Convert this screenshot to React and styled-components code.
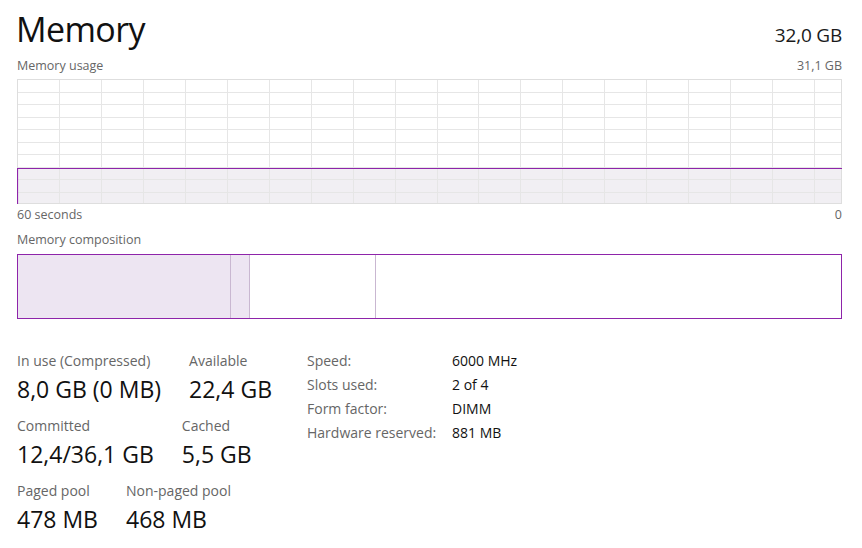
import React from "react";
import styled, { createGlobalStyle } from "styled-components";

const GlobalStyle = createGlobalStyle`
  html, body {
    margin: 0;
    padding: 0;
    background: #ffffff;
  }
  body {
    font-family: "Segoe UI", "Open Sans", "Noto Sans", sans-serif;
    color: #1a1a1a;
  }
`;

const GRAPH_W = 825;
const GRAPH_H = 125;
const GRID_X = 41.95;
const GRID_Y = 12.5;
const USAGE_Y = 89;
const PURPLE = "#8e24aa";

//   GRAPH LINES
const verticals = Array.from({ length: 19 }, (_, i) => (i + 1) * GRID_X);
const horizontals = Array.from({ length: 9 }, (_, i) => (i + 1) * GRID_Y);

const composition = [
  { key: "inuse", width: 212, fill: "#ede5f2" },
  { key: "modified", width: 18, fill: "#ede5f2" },
  { key: "standby", width: 125, fill: "#ffffff" },
];

const stats = [
  [
    { label: "In use (Compressed)", value: "8,0 GB (0 MB)" },
    { label: "Available", value: "22,4 GB" },
  ],
  [
    { label: "Committed", value: "12,4/36,1 GB" },
    { label: "Cached", value: "5,5 GB" },
  ],
  [
    { label: "Paged pool", value: "478 MB" },
    { label: "Non-paged pool", value: "468 MB" },
  ],
];

const details = [
  { label: "Speed:", value: "6000 MHz" },
  { label: "Slots used:", value: "2 of 4" },
  { label: "Form factor:", value: "DIMM" },
  { label: "Hardware reserved:", value: "881 MB" },
];

const UsageGraph = () => (
  <GraphSvg width={GRAPH_W} height={GRAPH_H} viewBox={`0 0 ${GRAPH_W} ${GRAPH_H}`}>
    <rect x="0" y={USAGE_Y} width={GRAPH_W} height={GRAPH_H - USAGE_Y} fill="#f1eff3" />
    {verticals.map((x) => (
      <line key={`v${x}`} x1={Math.round(x) + 0.5} y1="0" x2={Math.round(x) + 0.5} y2={GRAPH_H} stroke="#e6e6e6" strokeWidth="1" />
    ))}
    {horizontals.map((y) => (
      <line key={`h${y}`} x1="0" y1={Math.round(y) + 0.5} x2={GRAPH_W} y2={Math.round(y) + 0.5} stroke="#e6e6e6" strokeWidth="1" />
    ))}
    <rect x="0.5" y="0.5" width={GRAPH_W - 1} height={GRAPH_H - 1} fill="none" stroke="#dedede" strokeWidth="1" />
    <polyline
      points={`0.5,${GRAPH_H} 0.5,${USAGE_Y + 0.5} ${GRAPH_W},${USAGE_Y + 0.5}`}
      fill="none"
      stroke={PURPLE}
      strokeWidth="1.2"
    />
  </GraphSvg>
);

const App = () => {
  return (
    <>
      <GlobalStyle />
      <Page>
        <Header>
          <Title>Memory</Title>
          <Total>32,0 GB</Total>
        </Header>

        <CaptionRow>
          <Caption>Memory usage</Caption>
          <Caption>31,1 GB</Caption>
        </CaptionRow>
        <UsageGraph />
        <CaptionRow $gap={3}>
          <Caption>60 seconds</Caption>
          <Caption>0</Caption>
        </CaptionRow>

        <CaptionRow $gap={4}>
          <Caption>Memory composition</Caption>
        </CaptionRow>
        <CompositionBar>
          {composition.map((seg) => (
            <Segment key={seg.key} $width={seg.width} $fill={seg.fill} />
          ))}
          <FreeSegment />
        </CompositionBar>

        <Stats>
          <StatColumn>
            {stats.map((row, i) => (
              <StatRow key={i}>
                {row.map((s) => (
                  <Stat key={s.label}>
                    <StatLabel>{s.label}</StatLabel>
                    <StatValue>{s.value}</StatValue>
                  </Stat>
                ))}
              </StatRow>
            ))}
          </StatColumn>

          <Details>
            {details.map((d) => (
              <React.Fragment key={d.label}>
                <DetailLabel>{d.label}</DetailLabel>
                <DetailValue>{d.value}</DetailValue>
              </React.Fragment>
            ))}
          </Details>
        </Stats>
      </Page>
    </>
  );
};

const Page = styled.div`
  width: 825px;
  padding: 9px 20px 0 17px;
  display: flex;
  flex-direction: column;
`;

const Header = styled.div`
  display: flex;
  justify-content: space-between;
  align-items: baseline;
`;

const Title = styled.h1`
  margin: 0 0 0 -1px;
  font-size: 34px;
  line-height: 40px;
  font-weight: 400;
  letter-spacing: -0.6px;
  color: #111;
`;

const Total = styled.div`
  font-size: 19px;
  line-height: 24px;
  color: #1a1a1a;
  letter-spacing: -0.2px;
`;

const CaptionRow = styled.div`
  display: flex;
  justify-content: space-between;
  margin-top: ${(p) => p.$gap ?? 9}px;
  margin-bottom: 5px;
`;

const Caption = styled.span`
  font-size: 12.5px;
  line-height: 16px;
  color: #666;
`;

const GraphSvg = styled.svg`
  display: block;
`;

const CompositionBar = styled.div`
  display: flex;
  height: 63px;
  border: 1px solid ${PURPLE};
  margin-top: 1px;
`;

const Segment = styled.div`
  width: ${(p) => p.$width}px;
  background: ${(p) => p.$fill};
  border-right: 1px solid #c9b7d1;
`;

const FreeSegment = styled.div`
  flex: 1;
  background: #fff;
`;

const Stats = styled.div`
  display: flex;
  gap: 35px;
  margin-top: 33px;
`;

const StatColumn = styled.div`
  display: flex;
  flex-direction: column;
  gap: 14px;
`;

const StatRow = styled.div`
  display: flex;
  gap: 28px;
`;

const Stat = styled.div`
  display: flex;
  flex-direction: column;
  gap: 5px;
`;

const StatLabel = styled.span`
  font-size: 14px;
  line-height: 18px;
  color: #666;
  white-space: nowrap;
`;

const StatValue = styled.span`
  font-size: 23px;
  line-height: 28px;
  color: #111;
  white-space: nowrap;
`;

const Details = styled.div`
  display: grid;
  grid-template-columns: 145px auto;
  grid-auto-rows: 24px;
  align-items: center;
  margin-top: -4px;
`;

const DetailLabel = styled.span`
  font-size: 14px;
  color: #666;
`;

const DetailValue = styled.span`
  font-size: 14px;
  color: #111;
`;

export default App;
